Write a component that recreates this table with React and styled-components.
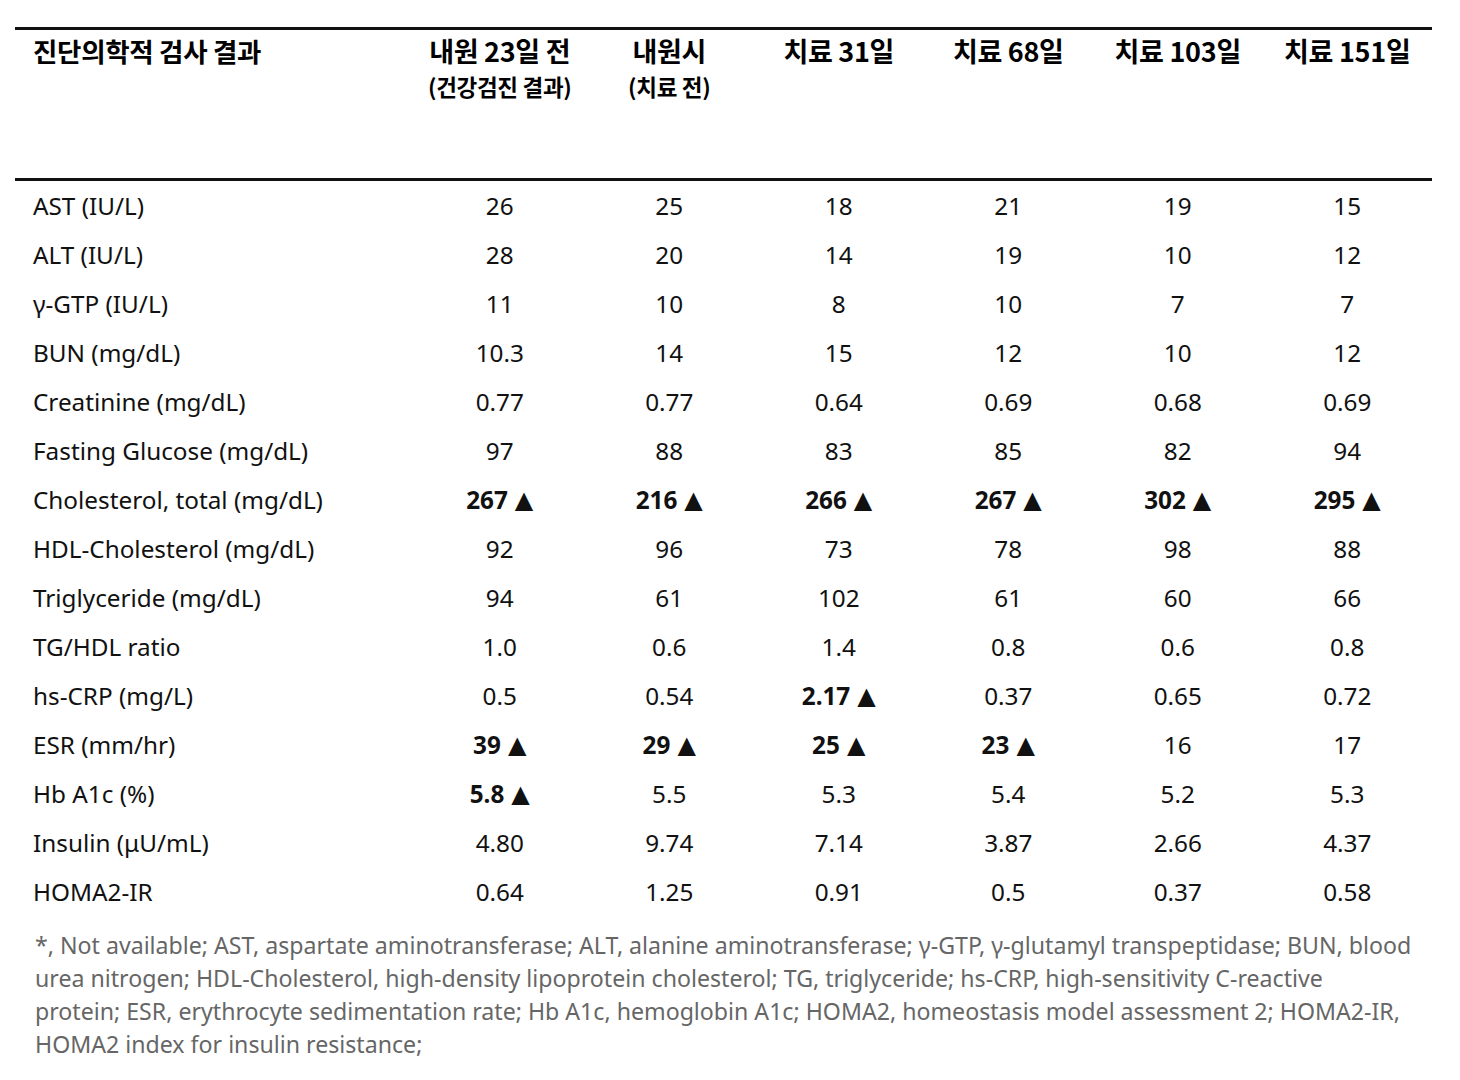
import React from "react";
import styled, { createGlobalStyle } from "styled-components";

const Global = createGlobalStyle`
  html, body { margin: 0; padding: 0; background: #fff; }
  body { font-family: "Noto Sans", "Noto Sans CJK KR", sans-serif; color: #111; }
`;

const Page = styled.div`
  width: 1460px;
  padding: 27px 28px 0 15px;
  box-sizing: border-box;
`;

const Table = styled.div`
  display: grid;
  grid-template-columns: 400px repeat(6, 1fr);
  width: 1417px;
  border-top: 3px solid #111;
`;

const HeadCell = styled.div`
  height: 151px;
  box-sizing: border-box;
  padding-top: 3px;
  padding-left: ${(p) => (p.$first ? "18px" : "0")};
  text-align: ${(p) => (p.$first ? "left" : "center")};
  border-bottom: 3px solid #111;
  font-family: "Noto Sans CJK KR", sans-serif;
  font-weight: 700;
  font-size: ${(p) => (p.$first ? "26.5px" : "27px")};
  line-height: 36px;
  letter-spacing: -0.3px;
  color: #000;
  white-space: nowrap;
`;

const Sub = styled.div`
  font-size: 22.5px;
  line-height: 34px;
`;

const Cell = styled.div`
  height: 49px;
  display: flex;
  align-items: center;
  justify-content: ${(p) => (p.$first ? "flex-start" : "center")};
  padding-left: ${(p) => (p.$first ? "18px" : "0")};
  font-size: 24.3px;
  font-weight: ${(p) => (p.$hi ? 700 : 400)};
  color: #111;
  white-space: nowrap;
`;

const Tri = styled.span`
  font-family: "DejaVu Sans", sans-serif;
  font-size: 24px;
  margin-left: 7px;
`;

const Note = styled.p`
  margin: 13px 0 0 20px;
  width: 1410px;
  font-size: 23.15px;
  line-height: 33px;
  color: #666;
  white-space: nowrap;
`;

const heads = [
  ["내원 23일 전", "(건강검진 결과)"],
  ["내원시", "(치료 전)"],
  ["치료 31일"],
  ["치료 68일"],
  ["치료 103일"],
  ["치료 151일"],
];

const rows = [
  ["AST (IU/L)", "26", "25", "18", "21", "19", "15"],
  ["ALT (IU/L)", "28", "20", "14", "19", "10", "12"],
  ["γ-GTP (IU/L)", "11", "10", "8", "10", "7", "7"],
  ["BUN (mg/dL)", "10.3", "14", "15", "12", "10", "12"],
  ["Creatinine (mg/dL)", "0.77", "0.77", "0.64", "0.69", "0.68", "0.69"],
  ["Fasting Glucose (mg/dL)", "97", "88", "83", "85", "82", "94"],
  ["Cholesterol, total (mg/dL)", "267*", "216*", "266*", "267*", "302*", "295*"],
  ["HDL-Cholesterol (mg/dL)", "92", "96", "73", "78", "98", "88"],
  ["Triglyceride (mg/dL)", "94", "61", "102", "61", "60", "66"],
  ["TG/HDL ratio", "1.0", "0.6", "1.4", "0.8", "0.6", "0.8"],
  ["hs-CRP (mg/L)", "0.5", "0.54", "2.17*", "0.37", "0.65", "0.72"],
  ["ESR (mm/hr)", "39*", "29*", "25*", "23*", "16", "17"],
  ["Hb A1c (%)", "5.8*", "5.5", "5.3", "5.4", "5.2", "5.3"],
  ["Insulin (μU/mL)", "4.80", "9.74", "7.14", "3.87", "2.66", "4.37"],
  ["HOMA2-IR", "0.64", "1.25", "0.91", "0.5", "0.37", "0.58"],
];

const noteLines = [
  "*, Not available; AST, aspartate aminotransferase; ALT, alanine aminotransferase; γ-GTP, γ-glutamyl transpeptidase; BUN, blood",
  "urea nitrogen; HDL-Cholesterol, high-density lipoprotein cholesterol; TG, triglyceride; hs-CRP, high-sensitivity C-reactive",
  "protein; ESR, erythrocyte sedimentation rate; Hb A1c, hemoglobin A1c; HOMA2, homeostasis model assessment 2; HOMA2-IR,",
  "HOMA2 index for insulin resistance;",
];

export default function App() {
  return (
    <Page>
      <Global />
      <Table>
        <HeadCell $first>진단의학적 검사 결과</HeadCell>
        {heads.map((h, i) => (
          <HeadCell key={i}>
            {h[0]}
            {h[1] && <Sub>{h[1]}</Sub>}
          </HeadCell>
        ))}
        {rows.map((r) =>
          r.map((v, j) => {
            const hi = v.endsWith("*");
            return (
              <Cell key={r[0] + j} $first={j === 0} $hi={hi}>
                {hi ? v.slice(0, -1) : v}
                {hi && <Tri>▲</Tri>}
              </Cell>
            );
          })
        )}
      </Table>
      <Note>
        {noteLines.map((l, i) => (
          <React.Fragment key={i}>
            {l}
            {i < noteLines.length - 1 && <br />}
          </React.Fragment>
        ))}
      </Note>
    </Page>
  );
}
